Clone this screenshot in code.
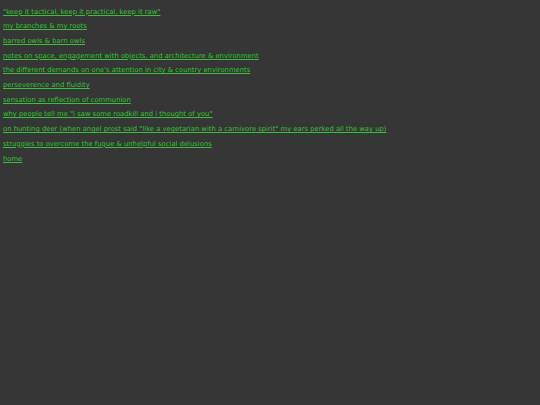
const links = [
  '"keep it tactical, keep it practical, keep it raw"',
  "my branches & my roots",
  "barred owls & barn owls",
  "notes on space, engagement with objects, and architecture & environment",
  "the different demands on one's attention in city & country environments",
  "perseverence and fluidity",
  "sensation as reflection of communion",
  'why people tell me "i saw some roadkill and i thought of you"',
  'on hunting deer (when angel prost said "like a vegetarian with a carnivore spirit" my ears perked all the way up)',
  "struggles to overcome the fugue & unhelpful social delusions",
  "home",
];

export default function App() {
  return (
    <div className="min-h-screen w-full bg-[#363636] px-[3px] pt-[4.5px] font-['DejaVu_Sans',Verdana,sans-serif] text-[6.8px]">
      {links.map((l) => (
        <div key={l} className="leading-[14.7px]">
          <a href="#" className="text-[#33c233] underline">
            {l}
          </a>
        </div>
      ))}
    </div>
  );
}
